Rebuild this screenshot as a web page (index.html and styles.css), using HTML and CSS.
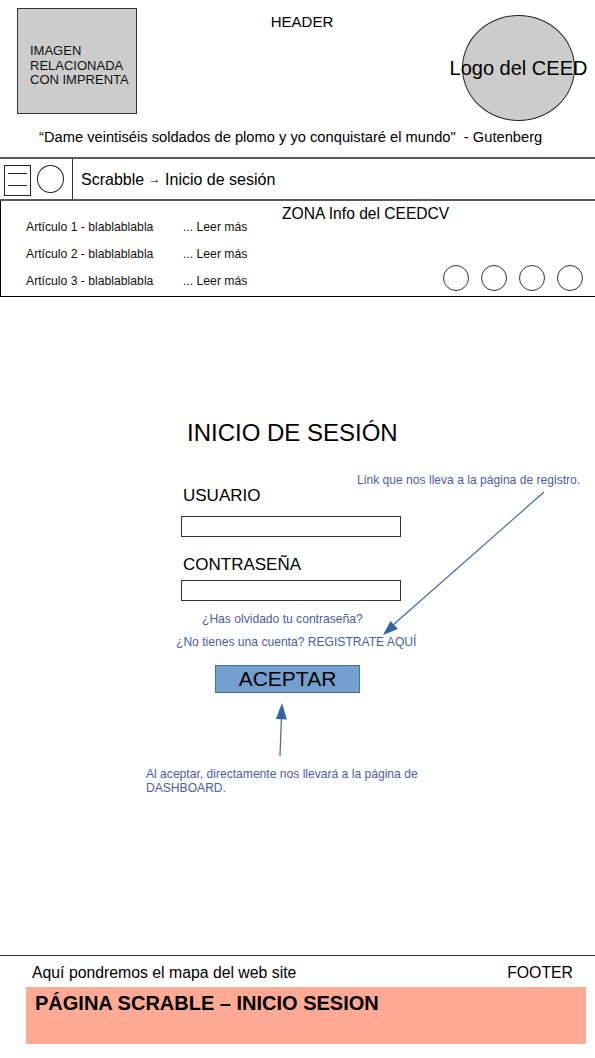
FILE: index.html
```html
<!DOCTYPE html>
<html lang="es">
<head>
<meta charset="utf-8">
<title>Scrabble - Inicio de sesión</title>
<link rel="stylesheet" href="styles.css">
</head>
<body>
<header class="header">
  <div class="header-row">
    <div class="img-box">IMAGEN<br>RELACIONADA<br>CON IMPRENTA</div>
    <div class="header-title">HEADER</div>
    <div class="logo"><span>Logo del CEED</span></div>
  </div>
  <p class="quote">“Dame veintiséis soldados de plomo y yo conquistaré el mundo"&nbsp; - Gutenberg</p>
</header>
<nav class="nav">
  <div class="nav-icons">
    <div class="burger"><span></span><span></span></div>
    <div class="nav-circle"></div>
  </div>
  <div class="crumbs">Scrabble <span class="crumb-arrow">→</span> Inicio de sesión</div>
</nav>
<section class="info">
  <ul class="articles">
    <li><span class="art">Artículo 1 - blablablabla</span><span class="more">... Leer más</span></li>
    <li><span class="art">Artículo 2 - blablablabla</span><span class="more">... Leer más</span></li>
    <li><span class="art">Artículo 3 - blablablabla</span><span class="more">... Leer más</span></li>
  </ul>
  <div class="info-side">
    <div class="info-title">ZONA Info del CEEDCV</div>
    <div class="socials"><span></span><span></span><span></span><span></span></div>
  </div>
</section>
<main class="main">
  <div class="login">
    <h1 class="login-title">INICIO DE SESIÓN</h1>
    <div class="label label-user">USUARIO</div>
    <div class="field"></div>
    <div class="label label-pass">CONTRASEÑA</div>
    <div class="field field-pass"></div>
    <div class="link link-forgot">¿Has olvidado tu contraseña?</div>
    <div class="link link-register">¿No tienes una cuenta? REGISTRATE AQUÍ</div>
    <div class="button">ACEPTAR</div>
  </div>
  <p class="note note-link">Link que nos lleva a la página de registro.</p>
  <p class="note note-accept">Al aceptar, directamente nos llevará a la página de<br>DASHBOARD.</p>
  <svg class="arrows" width="595" height="658" viewBox="0 0 595 658">
    <line x1="544" y1="195" x2="393" y2="328" stroke="#3f68a6" stroke-width="1.2"/>
    <polygon points="383,338 397.9,332.1 390.5,323.9" fill="#3465a4"/>
    <line x1="280" y1="459" x2="281.4" y2="421" stroke="#3f68a6" stroke-width="1.2"/>
    <polygon points="282,406 275.9,422 286.9,422.4" fill="#3465a4"/>
  </svg>
</main>
<footer class="footer">
  <div class="footer-row">
    <span>Aquí pondremos el mapa del web site</span>
    <span>FOOTER</span>
  </div>
  <div class="page-tag">PÁGINA SCRABLE – INICIO SESION</div>
</footer>
</body>
</html>
```

FILE: styles.css
```css
* {
  box-sizing: border-box;
}

html, body {
  margin: 0;
  padding: 0;
  background: #ffffff;
}

body {
  width: 595px;
  font-family: "Liberation Sans", Arial, sans-serif;
  color: #000;
}

/* HEADER */
.header-row {
  display: flex;
  align-items: flex-start;
  padding-top: 8px;
}

.img-box {
  width: 120px;
  height: 106px;
  margin-left: 17px;
  background: #cccccc;
  border: 1px solid #333;
  font-size: 13px;
  line-height: 14.5px;
  padding: 35px 0 0 12px;
  color: #111;
}

.header-title {
  flex: 1;
  text-align: center;
  font-size: 15px;
  line-height: 17px;
  padding-top: 5px;
  padding-left: 5px;
}

.logo {
  width: 113px;
  height: 106px;
  margin-top: 7px;
  margin-right: 20px;
  border-radius: 50%;
  border: 1px solid #222;
  background: #cccccc;
  display: flex;
  align-items: center;
  justify-content: center;
  font-size: 20px;
  white-space: nowrap;
}

.quote {
  margin: 8px 0 0;
  padding-left: 39px;
  font-size: 14.7px;
  line-height: 17px;
}

/* NAV */
.nav {
  margin-top: 11px;
  height: 44px;
  border-top: 2px solid #5a5a5a;
  border-bottom: 2px solid #5a5a5a;
  display: flex;
}

.nav-icons {
  width: 73px;
  border-right: 1px solid #333;
  display: flex;
  align-items: flex-start;
  padding-top: 6px;
}

.burger {
  width: 27px;
  height: 31px;
  margin-left: 4px;
  border: 1px solid #222;
  padding: 7px 3px;
  display: flex;
  flex-direction: column;
  gap: 11px;
}

.burger span {
  display: block;
  height: 1px;
  background: #222;
}

.nav-circle {
  width: 27px;
  height: 28px;
  margin-left: 6px;
  border: 1px solid #222;
  border-radius: 50%;
}

.crumbs {
  padding: 2px 0 0 8px;
  font-size: 16px;
  line-height: 38px;
}

.crumb-arrow {
  font-size: 12px;
  position: relative;
  top: -2px;
}

/* INFO ZONE */
.info {
  height: 96px;
  border-left: 1px solid #000;
  border-bottom: 1px solid #000;
  display: grid;
  grid-template-columns: 259px 1fr;
}

.articles {
  list-style: none;
  margin: 0;
  padding: 13px 0 0 25px;
  font-size: 12.2px;
  line-height: 27px;
  color: #111;
}

.articles li {
  display: flex;
}

.art {
  width: 157px;
}

.info-side {
  display: flex;
  flex-direction: column;
  padding: 4px 12px 5px 0;
}

.info-title {
  padding-left: 22px;
  font-size: 15.6px;
  line-height: 17px;
}

.socials {
  margin-top: auto;
  display: flex;
  justify-content: flex-end;
  gap: 12px;
}

.socials span {
  width: 26px;
  height: 26px;
  border: 1px solid #333;
  border-radius: 50%;
}

/* MAIN / LOGIN */
.main {
  position: relative;
  height: 658px;
}

.login {
  padding: 122px 0 0 175px;
  display: flex;
  flex-direction: column;
  align-items: flex-start;
}

.login-title {
  margin: 0 0 0 12px;
  font-size: 24px;
  line-height: 28px;
  font-weight: normal;
}

.label {
  margin: 39px 0 0 8px;
  font-size: 17px;
  line-height: 20px;
}

.label-pass {
  margin-top: 18px;
}

.field {
  width: 220px;
  height: 21px;
  margin: 10px 0 0 6px;
  border: 1px solid #333;
  background: #fff;
}

.field-pass {
  margin-top: 5px;
}

.link {
  font-size: 12.1px;
  line-height: 14px;
  color: #4a5ca8;
}

.link-forgot {
  margin: 11px 0 0 27px;
}

.link-register {
  margin: 9px 0 0 1px;
}

.button {
  width: 145px;
  height: 28px;
  margin: 16px 0 0 40px;
  background: #729fcf;
  border: 1px solid #4a6e9c;
  font-size: 21px;
  line-height: 26px;
  text-align: center;
  color: #000;
}

.note {
  position: absolute;
  margin: 0;
  font-size: 12.1px;
  line-height: 14px;
  color: #4c5caa;
}

.note-link {
  top: 176px;
  left: 357px;
}

.note-accept {
  top: 470px;
  left: 146px;
}

.arrows {
  position: absolute;
  top: 0;
  left: 0;
  pointer-events: none;
}

/* FOOTER */
.footer {
  border-top: 1px solid #333;
}

.footer-row {
  display: flex;
  justify-content: space-between;
  padding: 8px 22px 0 32px;
  font-size: 15.8px;
  line-height: 18px;
}

.page-tag {
  height: 57px;
  margin: 5px 9px 0 26px;
  background: #ffaa95;
  padding: 5px 0 0 9px;
  font-size: 20px;
  line-height: 23px;
  font-weight: bold;
}
```
